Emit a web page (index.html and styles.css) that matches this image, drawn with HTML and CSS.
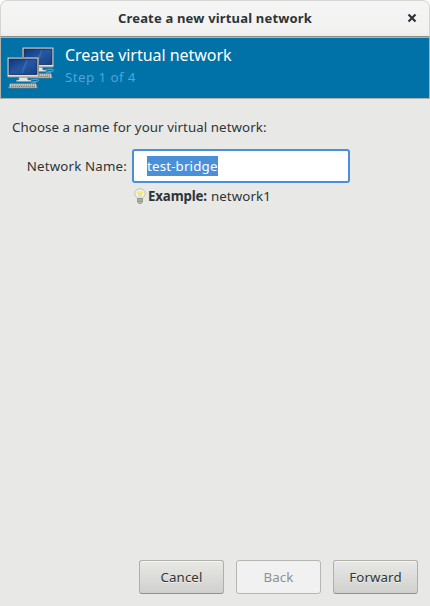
FILE: index.html
```
<!DOCTYPE html>
<html lang="en">
<head>
<meta charset="utf-8">
<title>Create a new virtual network</title>
<link rel="stylesheet" href="styles.css">
</head>
<body>
<div class="window">
  <header class="titlebar">
    <span class="title">Create a new virtual network</span>
    <svg class="close" width="10" height="10" viewBox="0 0 10 10"><path d="M1.5 1.5L8.5 8.5M8.5 1.5L1.5 8.5" stroke="#2e3436" stroke-width="2.2"/></svg>
  </header>
  <section class="banner">
    <svg class="computers" width="48" height="48" viewBox="0 0 48 48">
      <defs>
        <linearGradient id="screen" x1="0" y1="0" x2="1" y2="1">
          <stop offset="0" stop-color="#0e3478"/><stop offset=".5" stop-color="#2457a3"/><stop offset="1" stop-color="#173f88"/>
        </linearGradient>
        <g id="computer">
          <path d="M24 23C29 21.500 33 22.500 31 24C29 25 24 24.500 24.500 25.500C25 26.500 28 26 29 25.500" fill="none" stroke="#75a9c8" stroke-width="1"/>
          <path d="M12 20h8l1 3h3v1.500H9.500v-1.500H12z" fill="#e4e4df" stroke="#8f8f88" stroke-width=".5"/>
          <rect x=".5" y=".5" width="31" height="19.500" rx="1" fill="#e2e2dd" stroke="#92928b"/>
          <rect x="2" y="2" width="28" height="15.500" fill="url(#screen)" stroke="#102c60" stroke-width=".8"/>
          <path d="M14 16L19 3H21L16 16z" fill="#7ba2d6" opacity=".25"/>
          <path d="M3 26.500h26l1.300 4.500H1.700z" fill="#d6d6d1" stroke="#77776f" stroke-width=".8"/>
          <path d="M4 28h24M3.500 29.600h25" stroke="#777770" stroke-width="1" stroke-dasharray="1.500 .6"/>
        </g>
      </defs>
      <use href="#computer" x="15" y="0"/>
      <use href="#computer" x="0" y="10"/>
    </svg>
    <div class="heading">
      <div class="line"><span class="name">Create virtual network</span></div>
      <div class="line"><span class="step">Step 1 of 4</span></div>
    </div>
  </section>
  <main class="content">
    <p class="prompt">Choose a name for your virtual network:</p>
    <div class="form">
      <label class="label">Network Name:</label>
      <div class="entry"><span class="selection">test-bridge</span></div>
      <div class="hint">
        <svg class="bulb" width="16" height="16" viewBox="0 0 16 16">
          <path d="M8 .8C4.800 .8 2.700 3 2.700 5.500C2.700 8 5 8.500 5.300 10.500H10.700C11 8.500 13.300 8 13.300 5.500C13.300 3 11.200 .8 8 .8z" fill="#f5f4df" stroke="#b9b9b1" stroke-width=".9"/>
          <path d="M5 4.500L6.500 3.500L8 4.500L9.500 3.500L11 4.500L9.500 6H6.500z" fill="#fff36b" stroke="#e5d84e" stroke-width=".6"/>
          <path d="M7 6v4M9 6v4" stroke="#c5c4b5" stroke-width=".7"/>
          <path d="M5.500 10.500h5v3.500L9.200 15.500H6.800L5.500 14z" fill="#c8c8c4" stroke="#858580" stroke-width=".7"/>
          <path d="M6 12h4M6 13.700h4" stroke="#77776f" stroke-width=".7"/>
        </svg>
        <b class="example">Example:</b><span class="value">network1</span>
      </div>
    </div>
  </main>
  <footer class="actions">
    <button class="button">Cancel</button>
    <button class="button" disabled>Back</button>
    <button class="button">Forward</button>
  </footer>
</div>
</body>
</html>
```
FILE: styles.css
```
* { box-sizing: border-box; }
body { margin: 0; background: #fff; font: 13.3px/20px "Noto Sans", sans-serif; color: #2e3436; }
.window { width: 430px; height: 606px; display: flex; flex-direction: column; background: #e8e8e6; border-radius: 7px 7px 0 0; overflow: hidden; }
span, b { white-space: nowrap; }
.titlebar { height: 37px; flex: none; display: flex; align-items: center; justify-content: center; position: relative; padding-bottom: 2px; background: linear-gradient(#f5f5f5, #f2f2f1 85%, #ececeb); border: 1px solid #d5d5d2; border-bottom: 1px solid #8b8e87; border-radius: 7px 7px 0 0; }
.title { font-weight: 700; font-size: 13px; letter-spacing: .18px; }
.close { position: absolute; right: 12px; top: 12px; }
.banner { height: 62px; flex: none; display: flex; padding: 7px 0 0 6px; background: #0072a8; border: 1px solid #b0b0ac; }
.computers { flex: none; margin-top: 2px; }
.heading { margin-left: 10px; color: #fff; }
.line { height: 22px; line-height: 20px; }
.name { font-size: 16px; letter-spacing: -.03px; }
.step { color: #4fa6d9; letter-spacing: .45px; }
.content { flex: 1; padding: 18px 12px; }
.prompt { margin: 0; letter-spacing: .07px; }
.form { display: grid; grid-template-columns: 115px 218px; column-gap: 5px; row-gap: 3px; margin-top: 12px; }
.label { padding-top: 7px; text-align: right; letter-spacing: .17px; }
.entry { height: 34px; padding: 5px 13px; background: #fff; border: 2px solid #4a90d9; border-radius: 3px; }
.selection { display: inline-block; height: 20px; background: #4a90d9; color: #fff; letter-spacing: .17px; }
.hint { grid-column: 2; display: flex; align-items: center; height: 20px; }
.bulb { flex: none; }
.example { letter-spacing: -.15px; }
.value { margin-left: 4px; letter-spacing: .1px; }
.actions { display: flex; justify-content: flex-end; gap: 12px; padding: 0 12px 12px; }
.button { width: 85px; height: 34px; padding: 0; font: inherit; color: #2e3436; letter-spacing: .1px; text-shadow: 0 1px #f3f3f2; background: linear-gradient(#e8e8e6, #d0d0cd); border: 1px solid #b0b0aa; border-bottom-color: #8f918a; border-radius: 3px; box-shadow: inset 0 1px #f6f6f5; }
.button:disabled { color: #8e9192; background: #f1f1f1; border-color: #b7b7b1; box-shadow: none; text-shadow: none; }
```
